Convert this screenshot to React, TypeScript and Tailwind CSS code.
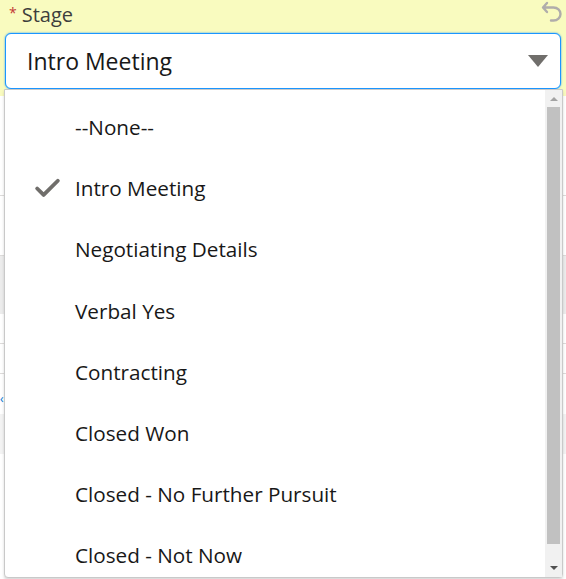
import { Check } from 'lucide-react';

const options = [
    '--None--',
    'Intro Meeting',
    'Negotiating Details',
    'Verbal Yes',
    'Contracting',
    'Closed Won',
    'Closed - No Further Pursuit',
    'Closed - Not Now',
];

export default function App() {
    const selected = 'Intro Meeting';

    return (
        <div
            className="relative w-[566px] h-[579px] overflow-hidden bg-white"
            style={{ fontFamily: '"Open Sans", "Liberation Sans", sans-serif' }}
        >
            {/* Field header */}
            <div className="bg-[#f9fbbf] h-[96px] pt-[1px] px-[5px]">
                <div className="flex items-center justify-between h-[30px]">
                    <div className="flex items-start pl-[4px] text-[20px] text-[#3e3e3c] leading-none -mt-[2px]">
                        <span className="text-[#c23934] text-[14px] mr-[5px] mt-[1px]">*</span>
                        <span>Stage</span>
                    </div>
                    <svg width="24" height="22" viewBox="0 0 24 22" className="-mt-[10px] mr-[-3px]">
                        <path
                            d="M7 3 L3 7.5 L7 12 M3.5 7.5 H13.5 C17.5 7.5 20.5 10.5 20.5 14 C20.5 17.5 17.5 20.5 13.5 20.5 H11"
                            fill="none"
                            stroke="#b0adab"
                            strokeWidth="2.4"
                            strokeLinecap="round"
                            strokeLinejoin="round"
                        />
                    </svg>
                </div>
                <div className="flex items-center justify-between h-[56px] mt-[2px] bg-white border border-[#1b96ff] rounded-[6px] shadow-[0_0_2px_#1b96ff] pl-[21px] pr-[12px]">
                    <span className="text-[23px] text-[#181818]">{selected}</span>
                    <svg width="20" height="12" viewBox="0 0 20 12">
                        <path d="M0 0 H20 L10 12 Z" fill="#706e6b" />
                    </svg>
                </div>
            </div>

            {/* Content behind the menu */}
            <div className="flex flex-col">
                <div className="h-[100px] border-b border-[#dddbda]" />
                <div className="h-[60px] border-b border-[#dddbda]" />
                <div className="h-[58px] bg-[#ececec]" />
                <div className="h-[30px] border-b border-[#dddbda]" />
                <div className="h-[30px] border-b border-[#dddbda]" />
                <div className="h-[40px] text-[#0176d3] text-[12px] pt-[16px] pl-0">‹</div>
                <div className="h-[40px] bg-[#f3f3f3]" />
            </div>

            {/* Dropdown menu */}
            <div className="absolute left-[4px] top-[89px] w-[559px] h-[489px] bg-white border border-[#c9c9c9] rounded-b-[4px] shadow-[0_2px_3px_rgba(0,0,0,0.16)] flex">
                <ul className="flex-1 flex flex-col pt-[7px]">
                    {options.map((opt) => (
                        <li key={opt} className="h-[61.2px] flex items-center text-[20.7px] text-[#181818] shrink-0">
                            <span className="w-[70px] flex justify-end pr-[12px]">
                                {opt === selected && (
                                    <Check size={31} strokeWidth={3} color="#706e6b" />
                                )}
                            </span>
                            <span>{opt}</span>
                        </li>
                    ))}
                </ul>
                <div className="w-[17px] bg-[#f1f1f1] flex flex-col items-center">
                    <div className="h-[17px] flex items-center justify-center">
                        <svg width="8" height="4" viewBox="0 0 8 4">
                            <path d="M0 4 L4 0 L8 4 Z" fill="#a3a3a3" />
                        </svg>
                    </div>
                    <div className="w-[13px] h-[437px] bg-[#c1c1c1]" />
                    <div className="flex-1 flex items-end justify-center pb-[7px]">
                        <svg width="8" height="4" viewBox="0 0 8 4">
                            <path d="M0 0 L8 0 L4 4 Z" fill="#505050" />
                        </svg>
                    </div>
                </div>
            </div>
        </div>
    );
}
